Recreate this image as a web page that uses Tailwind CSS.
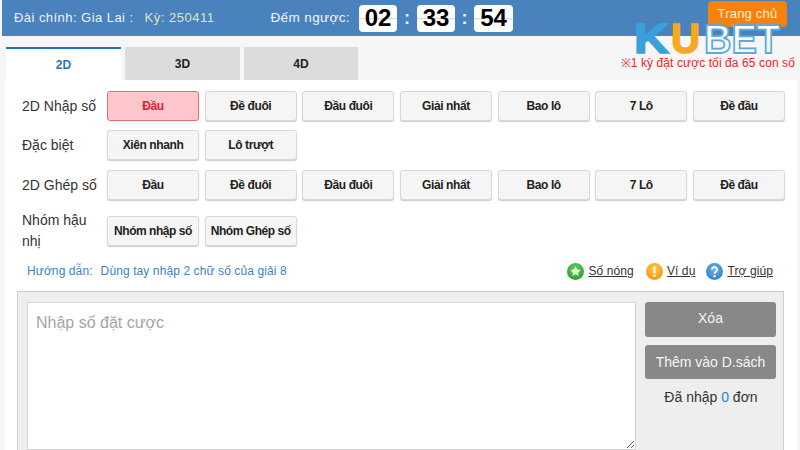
<!DOCTYPE html>
<html><head><meta charset="utf-8">
<script src="https://cdn.jsdelivr.net/npm/@tailwindcss/browser@4"></script>
</head>
<body class="m-0 bg-[#f3f3f3]">
<div class="relative w-[800px] h-[450px] overflow-hidden bg-[#f6f6f6] font-['Liberation_Sans',Arial,sans-serif] text-[#222]">
  <header class="ml-[2px] h-[36px] bg-[#4a82bd] flex items-center relative">
    <span class="ml-[12px] text-[13px] text-[#eef3f8] tracking-[0.45px]">Đài chính: Gia Lai :</span>
    <span class="ml-[11px] text-[13px] text-[#dfe6b0] tracking-[0.5px]">Kỳ: 250411</span>
    <span class="ml-[56px] text-[13.5px] text-[#f2f5f9] tracking-[0.4px]">Đếm ngược:</span>
    <div class="ml-[9px] flex items-center">
      <span class="w-[38px] h-[27px] bg-[linear-gradient(#fff_46%,#dcdcdc_50%,#fff_55%)] rounded-[4px] flex items-center justify-center text-[24px] font-bold text-black">02</span>
      <span class="w-[20px] text-center text-[18px] font-bold text-[#f0f4f8]">:</span>
      <span class="w-[38px] h-[27px] bg-[linear-gradient(#fff_46%,#dcdcdc_50%,#fff_55%)] rounded-[4px] flex items-center justify-center text-[24px] font-bold text-black">33</span>
      <span class="w-[19px] text-center text-[18px] font-bold text-[#f0f4f8]">:</span>
      <span class="w-[39px] h-[27px] bg-[linear-gradient(#fff_46%,#dcdcdc_50%,#fff_55%)] rounded-[4px] flex items-center justify-center text-[24px] font-bold text-black">54</span>
    </div>
  </header>
  <a class="absolute left-[708px] top-[1px] w-[79px] h-[26px] bg-[#f6820d] rounded-[4px] flex items-center justify-center text-[13px] text-[#fdeedd] tracking-[0.2px]">Trang chủ</a>
  <svg class="absolute left-[630px] top-[14px]" width="156" height="44" viewBox="0 0 156 44">
    <defs>
      <linearGradient id="betfill" x1="0" y1="0" x2="0" y2="1"><stop offset="0" stop-color="#ffffff"/><stop offset="1" stop-color="#eef7fc"/></linearGradient>
    </defs>
    <text x="4" y="39" font-family="Liberation Sans" font-weight="700" font-size="42" fill="#3aa0dc" stroke="#3aa0dc" stroke-width="1.6" textLength="35" lengthAdjust="spacingAndGlyphs">K</text>
    <text x="41" y="39" font-family="Liberation Sans" font-weight="700" font-size="42" fill="#f7a823" stroke="#f7a823" stroke-width="1.6" textLength="29" lengthAdjust="spacingAndGlyphs">U</text>
    <text x="74" y="39" font-family="Liberation Sans" font-weight="700" font-size="41" fill="url(#betfill)" stroke="#5fa9da" stroke-width="1.8" textLength="76" lengthAdjust="spacingAndGlyphs">BET</text>
  </svg>
  <p class="absolute right-[5px] top-[54px] text-[12px] text-[#e8272c] tracking-[0.1px]">※1 kỳ đặt cược tối đa 65 con số</p>

  <nav class="ml-[6px] mt-[11px] flex gap-[4px] h-[33px]">
    <div class="w-[115px] border-t-2 border-[#1b75bb] bg-white flex items-center justify-center text-[12px] font-bold text-[#2a77b5]">2D</div>
    <div class="w-[115px] bg-[#dcdcdc] flex items-center justify-center text-[12px] font-bold">3D</div>
    <div class="w-[114px] bg-[#dcdcdc] flex items-center justify-center text-[12px] font-bold">4D</div>
  </nav>

  <main class="ml-[5px] w-[792px] h-[370px] bg-white">
    <div class="pl-[17px] pt-[11px] pr-[12px] flex flex-col">
      <div class="flex items-center h-[30px]">
        <span class="w-[85px] shrink-0 text-[14px] text-[#333]">2D Nhập số</span>
        <div class="flex gap-[5.67px]">
          <button class="w-[92px] h-[30px] rounded-[3px] border border-[#e8697a] bg-[#ffc7cc] text-[12px] tracking-[-0.4px] font-bold text-[#e3202f]">Đầu</button>
          <button class="w-[92px] h-[30px] rounded-[3px] border border-[#d8d8d8] bg-[#f5f5f5] shadow-[0_1px_1px_#ccc] text-[12px] tracking-[-0.4px] font-bold text-[#222]">Đề đuôi</button>
          <button class="w-[92px] h-[30px] rounded-[3px] border border-[#d8d8d8] bg-[#f5f5f5] shadow-[0_1px_1px_#ccc] text-[12px] tracking-[-0.4px] font-bold text-[#222]">Đầu đuôi</button>
          <button class="w-[92px] h-[30px] rounded-[3px] border border-[#d8d8d8] bg-[#f5f5f5] shadow-[0_1px_1px_#ccc] text-[12px] tracking-[-0.4px] font-bold text-[#222]">Giải nhất</button>
          <button class="w-[92px] h-[30px] rounded-[3px] border border-[#d8d8d8] bg-[#f5f5f5] shadow-[0_1px_1px_#ccc] text-[12px] tracking-[-0.4px] font-bold text-[#222]">Bao lô</button>
          <button class="w-[92px] h-[30px] rounded-[3px] border border-[#d8d8d8] bg-[#f5f5f5] shadow-[0_1px_1px_#ccc] text-[12px] tracking-[-0.4px] font-bold text-[#222]">7 Lô</button>
          <button class="w-[92px] h-[30px] rounded-[3px] border border-[#d8d8d8] bg-[#f5f5f5] shadow-[0_1px_1px_#ccc] text-[12px] tracking-[-0.4px] font-bold text-[#222]">Đề đầu</button>
        </div>
      </div>
      <div class="flex items-center h-[30px] mt-[9px]">
        <span class="w-[85px] shrink-0 text-[14px] text-[#333]">Đặc biệt</span>
        <div class="flex gap-[5.67px]">
          <button class="w-[92px] h-[30px] rounded-[3px] border border-[#d8d8d8] bg-[#f5f5f5] shadow-[0_1px_1px_#ccc] text-[12px] tracking-[-0.4px] font-bold text-[#222]">Xiên nhanh</button>
          <button class="w-[92px] h-[30px] rounded-[3px] border border-[#d8d8d8] bg-[#f5f5f5] shadow-[0_1px_1px_#ccc] text-[12px] tracking-[-0.4px] font-bold text-[#222]">Lô trượt</button>
        </div>
      </div>
      <div class="flex items-center h-[30px] mt-[10px]">
        <span class="w-[85px] shrink-0 text-[14px] text-[#333]">2D Ghép số</span>
        <div class="flex gap-[5.67px]">
          <button class="w-[92px] h-[30px] rounded-[3px] border border-[#d8d8d8] bg-[#f5f5f5] shadow-[0_1px_1px_#ccc] text-[12px] tracking-[-0.4px] font-bold text-[#222]">Đầu</button>
          <button class="w-[92px] h-[30px] rounded-[3px] border border-[#d8d8d8] bg-[#f5f5f5] shadow-[0_1px_1px_#ccc] text-[12px] tracking-[-0.4px] font-bold text-[#222]">Đề đuôi</button>
          <button class="w-[92px] h-[30px] rounded-[3px] border border-[#d8d8d8] bg-[#f5f5f5] shadow-[0_1px_1px_#ccc] text-[12px] tracking-[-0.4px] font-bold text-[#222]">Đầu đuôi</button>
          <button class="w-[92px] h-[30px] rounded-[3px] border border-[#d8d8d8] bg-[#f5f5f5] shadow-[0_1px_1px_#ccc] text-[12px] tracking-[-0.4px] font-bold text-[#222]">Giải nhất</button>
          <button class="w-[92px] h-[30px] rounded-[3px] border border-[#d8d8d8] bg-[#f5f5f5] shadow-[0_1px_1px_#ccc] text-[12px] tracking-[-0.4px] font-bold text-[#222]">Bao lô</button>
          <button class="w-[92px] h-[30px] rounded-[3px] border border-[#d8d8d8] bg-[#f5f5f5] shadow-[0_1px_1px_#ccc] text-[12px] tracking-[-0.4px] font-bold text-[#222]">7 Lô</button>
          <button class="w-[92px] h-[30px] rounded-[3px] border border-[#d8d8d8] bg-[#f5f5f5] shadow-[0_1px_1px_#ccc] text-[12px] tracking-[-0.4px] font-bold text-[#222]">Đề đầu</button>
        </div>
      </div>
      <div class="flex items-center h-[46px] mt-[8px]">
        <span class="w-[85px] shrink-0 text-[14px] leading-[21px] text-[#333]">Nhóm hậu nhị</span>
        <div class="flex gap-[5.67px]">
          <button class="w-[92px] h-[30px] rounded-[3px] border border-[#d8d8d8] bg-[#f5f5f5] shadow-[0_1px_1px_#ccc] text-[12px] tracking-[-0.45px] font-bold text-[#222] whitespace-nowrap">Nhóm nhập số</button>
          <button class="w-[92px] h-[30px] rounded-[3px] border border-[#d8d8d8] bg-[#f5f5f5] shadow-[0_1px_1px_#ccc] text-[12px] tracking-[-0.45px] font-bold text-[#222] whitespace-nowrap">Nhóm Ghép số</button>
        </div>
      </div>
      <div class="flex items-center h-[24px] mt-[5px] pl-[5px] pr-[12px]">
        <span class="text-[12px] text-[#3d82bd] tracking-[0.1px]">Hướng dẫn:</span>
        <span class="ml-[8px] text-[12px] text-[#3d82bd] tracking-[0.1px]">Dùng tay nhập 2 chữ số của giải 8</span>
        <div class="ml-auto flex items-center text-[12px] text-[#333]">
          <svg width="17" height="17" viewBox="0 0 16 16"><defs><radialGradient id="g1" cx="50%" cy="35%" r="70%"><stop offset="0" stop-color="#6fd45f"/><stop offset="1" stop-color="#1f9a30"/></radialGradient><radialGradient id="g2" cx="50%" cy="35%" r="70%"><stop offset="0" stop-color="#fdc84a"/><stop offset="1" stop-color="#f4930f"/></radialGradient><radialGradient id="g3" cx="50%" cy="35%" r="70%"><stop offset="0" stop-color="#6db8ea"/><stop offset="1" stop-color="#2a7cc0"/></radialGradient></defs><circle cx="8" cy="8" r="8" fill="url(#g1)"/><path d="M8 3.2l1.5 3 3.3.4-2.4 2.3.6 3.3L8 10.6l-3 1.6.6-3.3-2.4-2.3 3.3-.4z" fill="#e9f8e6"/></svg>
          <span class="ml-[4px] underline tracking-[0.1px]">Số nóng</span>
          <svg class="ml-[12px]" width="17" height="17" viewBox="0 0 16 16"><circle cx="8" cy="8" r="8" fill="url(#g2)"/><rect x="7" y="3" width="2" height="7" rx="1" fill="#fff4d8"/><circle cx="8" cy="12" r="1.2" fill="#fff4d8"/></svg>
          <span class="ml-[4px] underline tracking-[0.1px]">Ví dụ</span>
          <svg class="ml-[11px]" width="17" height="17" viewBox="0 0 16 16"><circle cx="8" cy="8" r="8" fill="url(#g3)"/><path d="M5.6 6.2a2.4 2.4 0 1 1 3.6 2.1c-.8.5-1.2.9-1.2 1.7" fill="none" stroke="#fff" stroke-width="1.7"/><circle cx="8" cy="12.4" r="1.1" fill="#fff"/></svg>
          <span class="ml-[4px] underline tracking-[0.1px]">Trợ giúp</span>
        </div>
      </div>
    </div>
    <section class="ml-[12px] mt-[8px] w-[767px] h-[170px] border border-[#cfcfcf] bg-[#eeeeee] flex pl-[9px] pt-[10px]">
      <textarea placeholder="Nhập số đặt cược" class="w-[609px] h-[148px] bg-white border border-[#d4d4d4] pl-[8px] pt-[8px] text-[16px] placeholder:text-[#a4a4ac] outline-none"></textarea>
      <div class="ml-[9px] w-[131px] flex flex-col">
        <button class="h-[35px] pb-[2px] rounded-[3px] bg-[#888888] text-[14px] text-[#f5f5f5]">Xóa</button>
        <button class="h-[34px] mt-[8px] rounded-[3px] bg-[#888888] text-[14px] text-[#f5f5f5] whitespace-nowrap">Thêm vào D.sách</button>
        <p class="mt-[8px] pl-[1px] text-center text-[14px] text-[#333]">Đã nhập <span class="text-[#2f80d8]">0</span> đơn</p>
      </div>
    </section>
  </main>
</div>
</body></html>
